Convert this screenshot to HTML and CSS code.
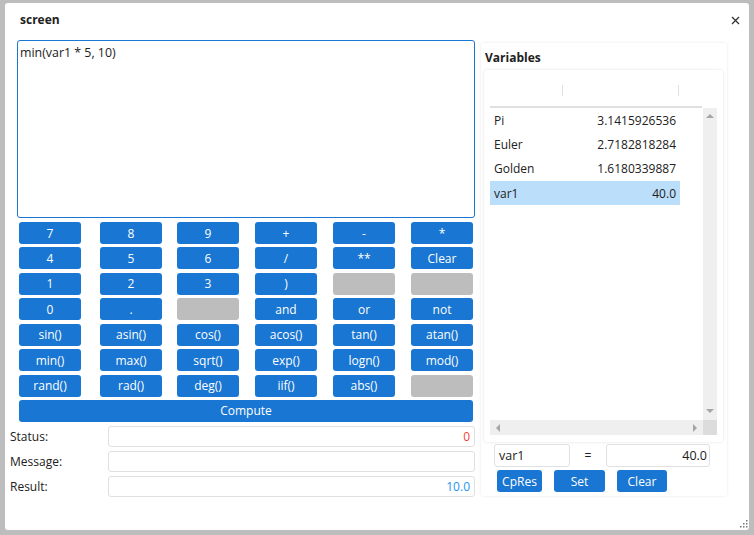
FILE: index.html
```html
<!DOCTYPE html>
<html>
<head>
<meta charset="utf-8">
<link rel="stylesheet" href="styles.css">
</head>
<body>
<div class="window">
  <div class="titlebar">
    <span class="title">screen</span>
    <svg class="close" width="9" height="9" viewBox="0 0 9 9"><path d="M1 1L8 8M8 1L1 8" stroke="#333" stroke-width="1.3" fill="none"/></svg>
  </div>
  <div class="body">
    <div class="left">
      <textarea class="expr" spellcheck="false">min(var1 * 5, 10)</textarea>
      <div class="keypad">
        <div class="btn">7</div><div class="btn">8</div><div class="btn">9</div><div class="btn">+</div><div class="btn">-</div><div class="btn">*</div>
        <div class="btn">4</div><div class="btn">5</div><div class="btn">6</div><div class="btn">/</div><div class="btn">**</div><div class="btn">Clear</div>
        <div class="btn">1</div><div class="btn">2</div><div class="btn">3</div><div class="btn">)</div><div class="btn off"></div><div class="btn off"></div>
        <div class="btn">0</div><div class="btn">.</div><div class="btn off"></div><div class="btn">and</div><div class="btn">or</div><div class="btn">not</div>
        <div class="btn">sin()</div><div class="btn">asin()</div><div class="btn">cos()</div><div class="btn">acos()</div><div class="btn">tan()</div><div class="btn">atan()</div>
        <div class="btn">min()</div><div class="btn">max()</div><div class="btn">sqrt()</div><div class="btn">exp()</div><div class="btn">logn()</div><div class="btn">mod()</div>
        <div class="btn">rand()</div><div class="btn">rad()</div><div class="btn">deg()</div><div class="btn">iif()</div><div class="btn">abs()</div><div class="btn off"></div>
        <div class="btn compute">Compute</div>
      </div>
      <div class="fields">
        <div class="field"><span class="label">Status:</span><div class="box status">0</div></div>
        <div class="field"><span class="label">Message:</span><div class="box"></div></div>
        <div class="field"><span class="label">Result:</span><div class="box result">10.0</div></div>
      </div>
    </div>
    <div class="right">
      <div class="vars-title">Variables</div>
      <div class="table">
        <div class="thead">
          <div class="th th-name"></div>
          <div class="th th-value"></div>
          <div class="th th-rest"></div>
        </div>
        <div class="tmain">
          <div class="viewport">
            <div class="row"><span>Pi</span><span>3.1415926536</span></div>
            <div class="row"><span>Euler</span><span>2.7182818284</span></div>
            <div class="row"><span>Golden</span><span>1.6180339887</span></div>
            <div class="row sel"><span>var1</span><span>40.0</span></div>
          </div>
          <div class="vscroll">
            <span class="arrow up"></span>
            <span class="arrow down"></span>
          </div>
        </div>
        <div class="hrow">
          <div class="hscroll">
            <span class="arrow left"></span>
            <span class="arrow rightarr"></span>
          </div>
          <div class="corner"></div>
        </div>
      </div>
      <div class="assign">
        <div class="in name">var1</div>
        <span class="eq">=</span>
        <div class="in val">40.0</div>
      </div>
      <div class="actions">
        <div class="btn b-cp">CpRes</div>
        <div class="btn b-set">Set</div>
        <div class="btn b-clear">Clear</div>
      </div>
    </div>
  </div>
  <svg class="grip" width="8" height="8" viewBox="0 0 8 8">
    <rect x="6" y="0" width="1.5" height="1.5" fill="#777"/>
    <rect x="3" y="3" width="1.5" height="1.5" fill="#777"/>
    <rect x="6" y="3" width="1.5" height="1.5" fill="#777"/>
    <rect x="0" y="6" width="1.5" height="1.5" fill="#777"/>
    <rect x="3" y="6" width="1.5" height="1.5" fill="#777"/>
    <rect x="6" y="6" width="1.5" height="1.5" fill="#777"/>
  </svg>
</div>
</body>
</html>
```

FILE: styles.css
```css
* { box-sizing: border-box; }
html, body { margin: 0; padding: 0; }
body {
  background: #bdbdbd;
  font-family: "Open Sans", "Noto Sans", sans-serif;
  font-size: 12px;
  color: #212121;
  width: 754px;
  height: 535px;
  overflow: hidden;
}
.window {
  position: relative;
  margin: 3px 0 0 5px;
  width: 744px;
  height: 527px;
  background: #fff;
  border-radius: 3px;
}
.titlebar {
  height: 33px;
  display: flex;
  align-items: center;
  justify-content: space-between;
  padding: 0 9px 0 15px;
}
.title { font-weight: bold; font-size: 12px; color: #212121; }
.close { display: block; margin-top: 1px; }
.body {
  display: flex;
  padding: 0 0 0 5px;
}
.left { width: 465px; display: flex; flex-direction: column; }
.expr {
  display: block;
  margin: 4px 0 0 7px;
  width: 458px;
  height: 178px;
  border: 1px solid #1976d2;
  border-radius: 3px;
  padding: 4px 2px 3px;
  font-family: inherit;
  font-size: 12.4px;
  line-height: 16px;
  color: #212121;
  resize: none;
  outline: none;
}
.keypad {
  margin: 4px 0 0 9px;
  display: grid;
  grid-template-columns: 81px 77px 78px 78px 78px 62px;
  grid-auto-rows: 22px;
  row-gap: 3.43px;
  width: 454px;
}
.btn {
  width: 62px;
  height: 22px;
  background: #1976d2;
  color: #fff;
  border-radius: 3px;
  display: flex;
  align-items: center;
  justify-content: center;
  line-height: 16px;
  padding-top: 1px;
}
.btn.off { background: #bdbdbd; }
.btn.compute { grid-column: 1 / -1; width: 454px; }
.fields { margin-top: 4px; display: flex; flex-direction: column; gap: 4px; }
.field { display: flex; align-items: center; height: 21px; }
.label { width: 98px; color: #212121; }
.box {
  width: 367px;
  height: 21px;
  border: 1px solid #e0e0e0;
  border-radius: 3px;
  text-align: right;
  padding: 0 4px;
  line-height: 19px;
}
.status { color: #f44336; }
.result { color: #2196f3; }
.right {
  margin: 7px 0 0 6px;
  width: 246px;
  height: 453px;
  box-shadow: 0 0 3px rgba(0,0,0,0.10);
  border-radius: 3px;
  padding: 5px 4px 0 3px;
}
.vars-title { font-weight: bold; padding: 1px 0 0 1px; line-height: 18px; height: 22px; }
.table {
  width: 239px;
  height: 372px;
  box-shadow: 0 0 3px rgba(0,0,0,0.12);
  border-radius: 3px;
  padding: 0 6px;
}
.thead {
  display: flex;
  width: 212px;
  height: 38px;
  border-bottom: 2px solid #e0e0e0;
  padding-top: 15px;
}
.th { height: 11px; }
.th-name { width: 73px; border-right: 1px solid #e0e0e0; }
.th-value { width: 116px; border-right: 1px solid #e0e0e0; }
.tmain { display: flex; height: 312px; }
.viewport { width: 213px; }
.row {
  width: 190px;
  height: 24.3px;
  display: flex;
  align-items: center;
  justify-content: space-between;
  padding: 0 4px;
}
.row.sel { background: #bbdefb; }
.vscroll {
  width: 14px;
  background: #efefef;
  display: flex;
  flex-direction: column;
  justify-content: space-between;
  align-items: center;
  padding: 6px 0 7px;
}
.hrow { display: flex; height: 15px; }
.hscroll {
  width: 213px;
  background: #efefef;
  display: flex;
  justify-content: space-between;
  align-items: center;
  padding: 0 6px;
}
.corner { width: 14px; background: #dcdcdc; }
.arrow { width: 0; height: 0; border-style: solid; display: block; }
.arrow.up { border-width: 0 4px 4px 4px; border-color: transparent transparent #a6a6a6 transparent; }
.arrow.down { border-width: 4px 4px 0 4px; border-color: #a6a6a6 transparent transparent transparent; }
.arrow.left { border-width: 4px 4px 4px 0; border-color: transparent #a6a6a6 transparent transparent; }
.arrow.rightarr { border-width: 4px 0 4px 4px; border-color: transparent transparent transparent #a6a6a6; }
.assign { display: flex; align-items: center; margin: 2px 0 0 10px; height: 23px; }
.in {
  height: 23px;
  border: 1px solid #e0e0e0;
  border-radius: 3px;
  line-height: 21px;
  padding: 0 4px;
  font-size: 12.5px;
}
.in.name { width: 76px; }
.eq { width: 36px; text-align: center; }
.in.val { width: 104px; text-align: right; padding-right: 2px; }
.actions { display: flex; margin: 3px 0 0 13px; }
.b-cp { width: 45px; }
.b-set { width: 51px; margin-left: 12px; }
.b-clear { width: 50px; margin-left: 12px; }
.grip { position: absolute; right: 1px; bottom: 2px; }
```
